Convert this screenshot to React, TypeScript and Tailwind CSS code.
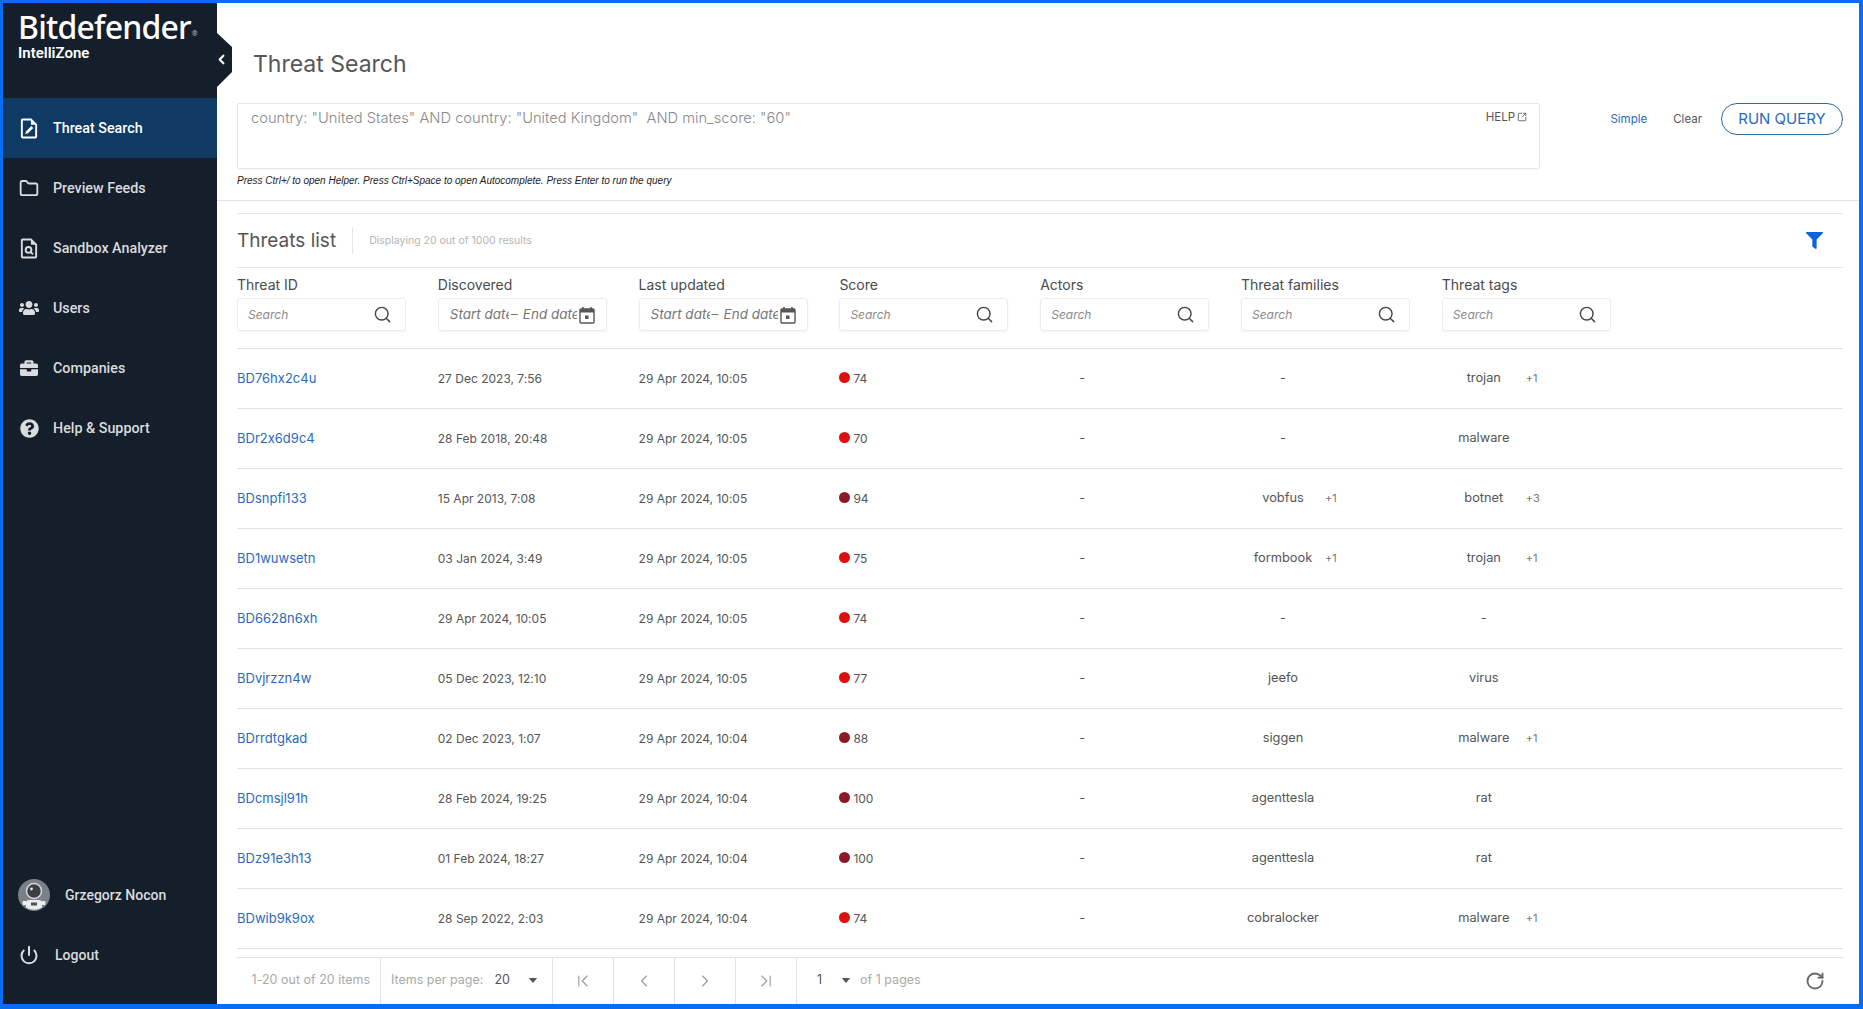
import { ChevronFirst, ChevronLast, ChevronLeft, ChevronRight, Folder, Power, RotateCw, Search, SquareArrowOutUpRight } from "lucide-react";
import { FaBriefcase, FaFilter, FaQuestionCircle, FaUsers } from "react-icons/fa";

const MAIN_FONT = "font-['Inter','Open_Sans',sans-serif] [font-feature-settings:'calt'_0]";

const ROWS = [
  { id: "BD76hx2c4u", discovered: "27 Dec 2023, 7:56", updated: "29 Apr 2024, 10:05", score: 74, family: "-", familyMore: "", tag: "trojan", tagMore: "+1" },
  { id: "BDr2x6d9c4", discovered: "28 Feb 2018, 20:48", updated: "29 Apr 2024, 10:05", score: 70, family: "-", familyMore: "", tag: "malware", tagMore: "" },
  { id: "BDsnpfi133", discovered: "15 Apr 2013, 7:08", updated: "29 Apr 2024, 10:05", score: 94, family: "vobfus", familyMore: "+1", tag: "botnet", tagMore: "+3" },
  { id: "BD1wuwsetn", discovered: "03 Jan 2024, 3:49", updated: "29 Apr 2024, 10:05", score: 75, family: "formbook", familyMore: "+1", tag: "trojan", tagMore: "+1" },
  { id: "BD6628n6xh", discovered: "29 Apr 2024, 10:05", updated: "29 Apr 2024, 10:05", score: 74, family: "-", familyMore: "", tag: "-", tagMore: "" },
  { id: "BDvjrzzn4w", discovered: "05 Dec 2023, 12:10", updated: "29 Apr 2024, 10:05", score: 77, family: "jeefo", familyMore: "", tag: "virus", tagMore: "" },
  { id: "BDrrdtgkad", discovered: "02 Dec 2023, 1:07", updated: "29 Apr 2024, 10:04", score: 88, family: "siggen", familyMore: "", tag: "malware", tagMore: "+1" },
  { id: "BDcmsjl91h", discovered: "28 Feb 2024, 19:25", updated: "29 Apr 2024, 10:04", score: 100, family: "agenttesla", familyMore: "", tag: "rat", tagMore: "" },
  { id: "BDz91e3h13", discovered: "01 Feb 2024, 18:27", updated: "29 Apr 2024, 10:04", score: 100, family: "agenttesla", familyMore: "", tag: "rat", tagMore: "" },
  { id: "BDwib9k9ox", discovered: "28 Sep 2022, 2:03", updated: "29 Apr 2024, 10:04", score: 74, family: "cobralocker", familyMore: "", tag: "malware", tagMore: "+1" },
];

function FilePenIcon() {
  return (
    <svg viewBox="0 0 18 22" className="h-[21px] w-[18px]" fill="none">
      <path d="M1.5 2.5a1 1 0 0 1 1-1h8.5l5.5 5.5v12.5a1 1 0 0 1-1 1h-13a1 1 0 0 1-1-1z" stroke="currentColor" strokeWidth="2" />
      <path d="M11 1.5v5.5h5.5" fill="currentColor" />
      <path d="M5 17l1-3 5.5-5.5 2 2L8 16z" fill="currentColor" />
    </svg>
  );
}

function FileSearchIcon() {
  return (
    <svg viewBox="0 0 18 22" className="h-[21px] w-[18px]" fill="none">
      <path d="M1.5 2.5a1 1 0 0 1 1-1h8.5l5.5 5.5v12.5a1 1 0 0 1-1 1h-13a1 1 0 0 1-1-1z" stroke="currentColor" strokeWidth="2" />
      <path d="M11 1.5v5.5h5.5" fill="currentColor" />
      <circle cx="8.5" cy="12.5" r="3" stroke="currentColor" strokeWidth="2" />
      <path d="M10.8 14.8l2.4 2.4" stroke="currentColor" strokeWidth="2" />
    </svg>
  );
}

function CalendarIcon() {
  return (
    <svg viewBox="0 0 16 18" className="h-[18px] w-[16px] shrink-0 text-[#555]" fill="none">
      <rect x="1" y="3" width="14" height="14" rx="1" stroke="currentColor" strokeWidth="1.4" />
      <path d="M1 3h14v3.5H1z" fill="currentColor" />
      <path d="M4 1v3M12 1v3" stroke="currentColor" strokeWidth="1.6" />
      <rect x="6" y="9.5" width="3.5" height="3.5" fill="currentColor" />
    </svg>
  );
}

function AvatarIcon() {
  return (
    <svg viewBox="0 0 32 32" className="h-[32px] w-[32px]">
      <circle cx="16" cy="16" r="16" fill="#7b7f86" />
      <circle cx="16" cy="12" r="7.5" fill="#3a3f47" stroke="#d8d8d8" strokeWidth="1.5" />
      <circle cx="13.5" cy="10" r="1.4" fill="#e8e8e8" />
      <path d="M8 24a3 3 0 0 1 3-3h10a3 3 0 0 1 3 3v4.5a16 16 0 0 1-16 0z" fill="#ececec" />
      <rect x="4.5" y="22" width="4" height="4" rx="1" fill="#ececec" />
      <rect x="23.5" y="22" width="4" height="4" rx="1" fill="#ececec" />
      <rect x="13" y="23.5" width="6" height="3" fill="#4a4f57" />
    </svg>
  );
}

function Caret() {
  return (
    <svg viewBox="0 0 10 6" className="h-[5px] w-[10px] text-[#555]">
      <path d="M0 0h10L5 6z" fill="currentColor" />
    </svg>
  );
}

function NavItem({ icon, label, active }: { icon: React.ReactNode; label: string; active?: boolean }) {
  return (
    <div className={`flex h-[60px] items-center pl-[16px] ${active ? "bg-[#0f3a63] text-white" : "text-[#d9dbde]"}`}>
      <span className="flex w-[20px] justify-center">{icon}</span>
      <span className="ml-[14px] pt-[1px] text-[14.3px] font-medium">{label}</span>
    </div>
  );
}

function SearchInput() {
  return (
    <div className="flex h-[33px] w-[169px] items-center justify-between rounded-[3px] border border-[#ececec] pl-[10px] pr-[13px] shadow-[0_1px_2px_rgba(0,0,0,0.05)]">
      <span className="text-[12px] italic text-[#8a8a8a]">Search</span>
      <Search size={19} strokeWidth={1.8} className="text-[#444]" />
    </div>
  );
}

function DateInput() {
  return (
    <div className="flex h-[33px] w-[169px] items-center rounded-[3px] border border-[#ececec] pl-[11px] pr-[11px] text-[13.5px] italic text-[#777] shadow-[0_1px_2px_rgba(0,0,0,0.05)]">
      <span className="w-[59px] shrink-0 overflow-hidden whitespace-nowrap">Start date</span>
      <span className="w-[14px] shrink-0 pl-[2px]">–</span>
      <span className="w-[54px] shrink-0 overflow-hidden whitespace-nowrap">End date</span>
      <span className="ml-auto"><CalendarIcon /></span>
    </div>
  );
}

function Column({ label, children }: { label: string; children: React.ReactNode }) {
  return (
    <div className="flex flex-col">
      <span className="mb-[3px] text-[14px] leading-[20px] text-[#4a4a4a]">{label}</span>
      {children}
    </div>
  );
}

function TagCell({ value, more }: { value: string; more: string }) {
  return (
    <div className="flex items-center pb-[1px]">
      <span className="w-[84px] text-center text-[12.8px]">{value}</span>
      {more && <span className="text-[11px] text-[#777]">{more}</span>}
    </div>
  );
}

function PagerButton({ children }: { children: React.ReactNode }) {
  return (
    <div className="flex h-full w-[61px] items-center justify-center border-r border-[#e2e2e2] text-[#999]">
      {children}
    </div>
  );
}

export default function App() {
  return (
    <div className={`flex h-[1009px] w-[1863px] overflow-hidden border-b-[5px] border-l-[3px] border-r-[4px] border-t-[3px] border-[#0a6cf0] bg-white ${MAIN_FONT}`}>
      {/* Sidebar */}
      <aside className="relative flex w-[214px] shrink-0 flex-col bg-[#151e2b] font-['Roboto',sans-serif]">
        <div className="h-[95px] pl-[15px] pt-[8px] text-white">
          <div className="flex items-end font-['Noto_Sans',sans-serif] text-[32px] font-medium leading-[32px] tracking-[-0.8px]">
            Bitdefender
            <span className="mb-[5px] ml-[1px] text-[7px] leading-[8px] tracking-normal text-[#bbb]">®</span>
          </div>
          <div className="mt-[2px] text-[15px] font-semibold leading-[16px]">IntelliZone</div>
        </div>

        {/* Collapse notch */}
        <div className="absolute left-[214px] top-[30px] h-[54px] w-[15px] bg-[#151e2b] [clip-path:polygon(0_0,100%_26%,100%_72%,0_100%)]" />
        <ChevronLeft size={15} strokeWidth={3.5} className="absolute left-[211px] top-[49px] text-white" />

        <NavItem active icon={<FilePenIcon />} label="Threat Search" />
        <NavItem icon={<Folder size={21} strokeWidth={2.2} />} label="Preview Feeds" />
        <NavItem icon={<FileSearchIcon />} label="Sandbox Analyzer" />
        <NavItem icon={<FaUsers size={20} />} label="Users" />
        <NavItem icon={<FaBriefcase size={18} />} label="Companies" />
        <NavItem icon={<FaQuestionCircle size={19} />} label="Help & Support" />

        <div className="mt-auto pb-[19px] text-[#d9dbde]">
          <div className="flex h-[60px] items-center pl-[15px]">
            <AvatarIcon />
            <span className="ml-[15px] text-[14px] font-medium">Grzegorz Nocon</span>
          </div>
          <div className="flex h-[60px] items-center pl-[16px]">
            <Power size={20} strokeWidth={2.4} />
            <span className="ml-[16px] text-[14px] font-medium">Logout</span>
          </div>
        </div>
      </aside>

      {/* Main */}
      <main className="flex min-w-0 flex-1 flex-col">
        <header className="h-[198px] shrink-0 border-b border-[#e4e4e4]">
          <h1 className="pl-[36px] pt-[46px] text-[23px] font-normal leading-[30px] text-[#555]">Threat Search</h1>
          <div className="mt-[24px] flex items-start pl-[20px] pr-[16px]">
            <div className="flex-1">
              <div className="flex h-[66px] w-[1303px] items-start justify-between rounded-[2px] border border-[#e6e6e6] pl-[13px] pr-[12px] pt-[5px] shadow-[0_1px_2px_rgba(0,0,0,0.04)]">
                <span className="whitespace-pre text-[14.7px] font-light leading-[18px] text-[#888]">
                  country: "United States" AND country: "United Kingdom"  AND min_score: "60"
                </span>
                <span className="flex items-center gap-[2px] text-[11.5px] leading-[16px] text-[#555]">
                  HELP
                  <SquareArrowOutUpRight size={10} />
                </span>
              </div>
              <p className="mt-[6px] font-['Liberation_Sans',sans-serif] text-[10px] italic leading-[12px] text-[#222]">
                Press Ctrl+/ to open Helper. Press Ctrl+Space to open Autocomplete. Press Enter to run the query
              </p>
            </div>
            <div className="flex h-[32px] items-center">
              <span className="pt-[1px] text-[11.5px] text-[#2a6ab8]">Simple</span>
              <span className="ml-[26px] pt-[1px] text-[11.5px] text-[#555]">Clear</span>
              <button className="ml-[19px] flex h-[32px] w-[122px] items-center justify-center rounded-full border border-[#2a6aa8] text-[15px] font-normal text-[#2a6ab8]">
                RUN QUERY
              </button>
            </div>
          </div>
        </header>

        <section className="mx-[16px] ml-[20px] mt-[12px] flex min-h-0 flex-1 flex-col">
          <div className="flex h-[55px] shrink-0 items-center border-y border-[#e6e6e6]">
            <h2 className="pt-[1px] text-[19px] font-normal text-[#555]">Threats list</h2>
            <span className="ml-[16px] h-[27px] w-px bg-[#e6e6e6]" />
            <span className="ml-[16px] text-[10.5px] text-[#b5b5b5]">Displaying 20 out of 1000 results</span>
            <FaFilter size={17} className="ml-auto mr-[20px] text-[#0a62e0]" />
          </div>

          <div className="grid h-[81px] shrink-0 grid-cols-[repeat(7,200.8px)] content-start border-b border-[#e2e2e2] pt-[7px]">
            <Column label="Threat ID"><SearchInput /></Column>
            <Column label="Discovered"><DateInput /></Column>
            <Column label="Last updated"><DateInput /></Column>
            <Column label="Score"><SearchInput /></Column>
            <Column label="Actors"><SearchInput /></Column>
            <Column label="Threat families"><SearchInput /></Column>
            <Column label="Threat tags"><SearchInput /></Column>
          </div>

          {ROWS.map((row) => (
            <div key={row.id} className="grid h-[60px] shrink-0 grid-cols-[repeat(7,200.8px)] items-center border-b border-[#e2e2e2] text-[12px] text-[#555]">
              <span className="text-[13px] text-[#2a6ab8]">{row.id}</span>
              <span>{row.discovered}</span>
              <span>{row.updated}</span>
              <span className="flex items-center">
                <span className={`mb-[2px] size-[11px] rounded-full ${row.score >= 85 ? "bg-[#8b1a26]" : "bg-[#e01010]"}`} />
                <span className="ml-[3px]">{row.score}</span>
              </span>
              <TagCell value="-" more="" />
              <TagCell value={row.family} more={row.familyMore} />
              <TagCell value={row.tag} more={row.tagMore} />
            </div>
          ))}

          <div className="mt-[8px] flex min-h-0 flex-1 items-center border-t border-[#e2e2e2] text-[12.5px] text-[#aaa]">
            <div className="flex h-full w-[144px] items-center justify-end border-r border-[#e2e2e2] pb-[1px] pr-[10px]">1-20 out of 20 items</div>
            <div className="flex h-full w-[172px] items-center border-r border-[#e2e2e2] pb-[1px] pl-[10px]">
              Items per page:
              <span className="ml-[11px] text-[#555]">20</span>
              <span className="ml-[18px]"><Caret /></span>
            </div>
            <PagerButton><ChevronFirst size={20} strokeWidth={1.3} /></PagerButton>
            <PagerButton><ChevronLeft size={20} strokeWidth={1.3} /></PagerButton>
            <PagerButton><ChevronRight size={20} strokeWidth={1.3} /></PagerButton>
            <PagerButton><ChevronLast size={20} strokeWidth={1.3} /></PagerButton>
            <div className="flex h-full items-center pb-[1px] pl-[20px]">
              <span className="text-[#555]">1</span>
              <span className="ml-[19px]"><Caret /></span>
              <span className="ml-[9px]">of 1 pages</span>
            </div>
            <RotateCw size={20} strokeWidth={2.2} className="ml-auto mr-[18px] text-[#666]" />
          </div>
        </section>
      </main>
    </div>
  );
}
